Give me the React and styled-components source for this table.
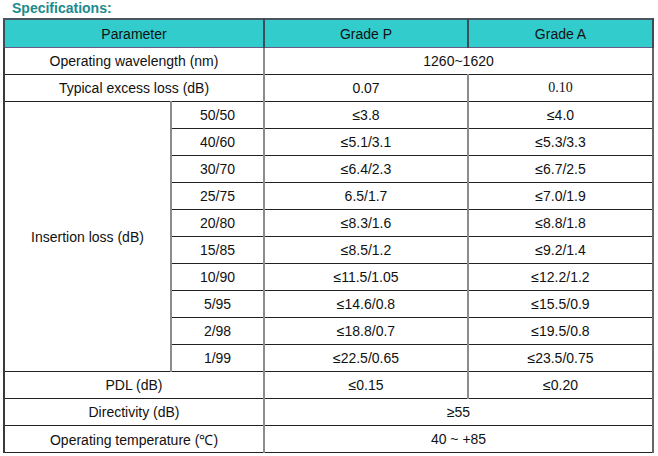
import React from "react";
import styled, { createGlobalStyle } from "styled-components";

const Global = createGlobalStyle`
  html, body { margin: 0; padding: 0; background: #fff; }
  body { font-family: "Liberation Sans", Arial, sans-serif; }
`;

const Page = styled.div`
  width: 658px;
  height: 456px;
  display: flex;
  flex-direction: column;
  background: #fff;
`;

const Title = styled.h2`
  margin: 0;
  padding: 0 0 0 12px;
  font-size: 14px;
  line-height: 16px;
  font-weight: bold;
  color: #1c8a8e;
`;

const Table = styled.table`
  margin: 2px 0 0 3px;
  width: 649px;
  border-collapse: collapse;
  table-layout: fixed;
  font-size: 14px;
  color: #111;
`;

const Head = styled.th`
  height: 27px;
  padding: 0;
  background: #33cccc;
  font-weight: normal;
  text-align: center;
  border-top: 2px solid #4a5560;
  border-bottom: 1px solid #6a5a8a;
  border-left: 2px solid #3d4d55;
  border-right: 2px solid #3d4d55;
  color: #111;
`;

const Cell = styled.td`
  height: 26px;
  padding: 0;
  text-align: center;
  border-top: 1px solid #222;
  border-bottom: 1px solid #222;
  border-left: 2px solid #8c8c8c;
  border-right: 2px solid #8c8c8c;
  font-family: ${(p) => (p.$serif ? '"Liberation Serif", "Times New Roman", serif' : "inherit")};
`;

const Edge = styled(Cell)`
  border-left: 2px solid #3a3a3a;
`;

const RightEdge = styled(Cell)`
  border-right: 2px solid #666;
`;

const insertion = [
  ["50/50", "≤3.8", "≤4.0"],
  ["40/60", "≤5.1/3.1", "≤5.3/3.3"],
  ["30/70", "≤6.4/2.3", "≤6.7/2.5"],
  ["25/75", "6.5/1.7", "≤7.0/1.9"],
  ["20/80", "≤8.3/1.6", "≤8.8/1.8"],
  ["15/85", "≤8.5/1.2", "≤9.2/1.4"],
  ["10/90", "≤11.5/1.05", "≤12.2/1.2"],
  ["5/95", "≤14.6/0.8", "≤15.5/0.9"],
  ["2/98", "≤18.8/0.7", "≤19.5/0.8"],
  ["1/99", "≤22.5/0.65", "≤23.5/0.75"],
];

export default function App() {
  return (
    <Page>
      <Global />
      <Title>Specifications:</Title>
      <Table>
        <colgroup>
          <col style={{ width: 167 }} />
          <col style={{ width: 93 }} />
          <col style={{ width: 204 }} />
          <col style={{ width: 185 }} />
        </colgroup>
        <thead>
          <tr>
            <Head colSpan={2}>Parameter</Head>
            <Head>Grade P</Head>
            <Head>Grade A</Head>
          </tr>
        </thead>
        <tbody>
          <tr>
            <Edge colSpan={2}>Operating wavelength (nm)</Edge>
            <RightEdge colSpan={2}>1260~1620</RightEdge>
          </tr>
          <tr>
            <Edge colSpan={2}>Typical excess loss (dB)</Edge>
            <Cell>0.07</Cell>
            <RightEdge $serif>0.10</RightEdge>
          </tr>
          {insertion.map(([ratio, p, a], i) => (
            <tr key={ratio}>
              {i === 0 && <Edge rowSpan={insertion.length}>Insertion loss (dB)</Edge>}
              <Cell>{ratio}</Cell>
              <Cell>{p}</Cell>
              <RightEdge>{a}</RightEdge>
            </tr>
          ))}
          <tr>
            <Edge colSpan={2}>PDL (dB)</Edge>
            <Cell>≤0.15</Cell>
            <RightEdge>≤0.20</RightEdge>
          </tr>
          <tr>
            <Edge colSpan={2}>Directivity (dB)</Edge>
            <RightEdge colSpan={2}>≥55</RightEdge>
          </tr>
          <tr>
            <Edge colSpan={2}>Operating temperature (℃)</Edge>
            <RightEdge colSpan={2}>40 ~ +85</RightEdge>
          </tr>
        </tbody>
      </Table>
    </Page>
  );
}
